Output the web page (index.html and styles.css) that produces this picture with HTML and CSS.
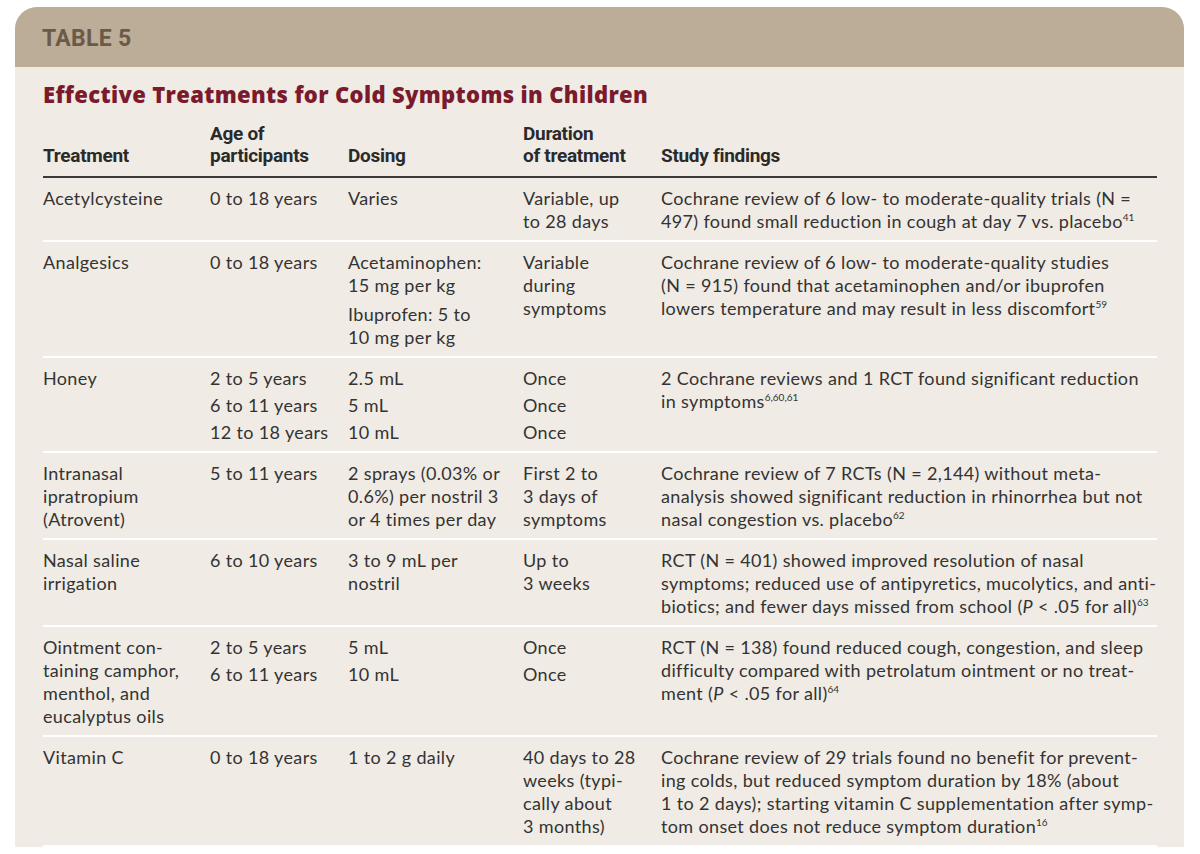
FILE: index.html
```html
<!DOCTYPE html>
<html lang="en">
<head>
    <meta charset="UTF-8">
    <title>Table 5 - Effective Treatments for Cold Symptoms in Children</title>
<link rel="stylesheet" href="styles.css">
</head>
<body>
    <div class="table-card">
        <div class="card-head">TABLE 5</div>
        <div class="card-body">
            <h2 class="card-title">Effective Treatments for Cold Symptoms in Children</h2>
            <table class="treat-table">
                <thead>
                    <tr>
                        <th class="col-treat">Treatment</th>
                        <th class="col-age">Age of<br>participants</th>
                        <th class="col-dose">Dosing</th>
                        <th class="col-dur">Duration<br>of treatment</th>
                        <th class="col-find">Study findings</th>
                    </tr>
                </thead>
                <tbody>
                    <tr>
                        <td>Acetylcysteine</td>
                        <td>0 to 18 years</td>
                        <td>Varies</td>
                        <td>Variable, up<br>to 28 days</td>
                        <td>Cochrane review of 6 low- to moderate-quality trials (N =<br>497) found small reduction in cough at day 7 vs. placebo<sup>41</sup></td>
                    </tr>
                    <tr>
                        <td>Analgesics</td>
                        <td>0 to 18 years</td>
                        <td>
                            <p class="dose-line">Acetaminophen:<br>15 mg per kg</p>
                            <p class="dose-line">Ibuprofen: 5 to<br>10 mg per kg</p>
                        </td>
                        <td>Variable<br>during<br>symptoms</td>
                        <td>Cochrane review of 6 low- to moderate-quality studies<br>(N = 915) found that acetaminophen and/or ibuprofen<br>lowers temperature and may result in less discomfort<sup>59</sup></td>
                    </tr>
                    <tr>
                        <td>Honey</td>
                        <td class="stack"><div>2 to 5 years</div><div>6 to 11 years</div><div>12 to 18 years</div></td>
                        <td class="stack"><div>2.5 mL</div><div>5 mL</div><div>10 mL</div></td>
                        <td class="stack"><div>Once</div><div>Once</div><div>Once</div></td>
                        <td>2 Cochrane reviews and 1 RCT found significant reduction<br>in symptoms<sup>6,60,61</sup></td>
                    </tr>
                    <tr>
                        <td>Intranasal<br>ipratropium<br>(Atrovent)</td>
                        <td>5 to 11 years</td>
                        <td>2 sprays (0.03% or<br>0.6%) per nostril 3<br>or 4 times per day</td>
                        <td>First 2 to<br>3 days of<br>symptoms</td>
                        <td>Cochrane review of 7 RCTs (N = 2,144) without meta-<br>analysis showed significant reduction in rhinorrhea but not<br>nasal congestion vs. placebo<sup>62</sup></td>
                    </tr>
                    <tr>
                        <td>Nasal saline<br>irrigation</td>
                        <td>6 to 10 years</td>
                        <td>3 to 9 mL per<br>nostril</td>
                        <td>Up to<br>3 weeks</td>
                        <td>RCT (N = 401) showed improved resolution of nasal<br>symptoms; reduced use of antipyretics, mucolytics, and anti-<br>biotics; and fewer days missed from school (<i>P</i> &lt; .05 for all)<sup>63</sup></td>
                    </tr>
                    <tr>
                        <td>Ointment con-<br>taining camphor,<br>menthol, and<br>eucalyptus oils</td>
                        <td class="stack"><div>2 to 5 years</div><div>6 to 11 years</div></td>
                        <td class="stack"><div>5 mL</div><div>10 mL</div></td>
                        <td class="stack"><div>Once</div><div>Once</div></td>
                        <td>RCT (N = 138) found reduced cough, congestion, and sleep<br>difficulty compared with petrolatum ointment or no treat-<br>ment (<i>P</i> &lt; .05 for all)<sup>64</sup></td>
                    </tr>
                    <tr>
                        <td>Vitamin C</td>
                        <td>0 to 18 years</td>
                        <td>1 to 2 g daily</td>
                        <td>40 days to 28<br>weeks (typi-<br>cally about<br>3 months)</td>
                        <td>Cochrane review of 29 trials found no benefit for prevent-<br>ing colds, but reduced symptom duration by 18% (about<br>1 to 2 days); starting vitamin C supplementation after symp-<br>tom onset does not reduce symptom duration<sup>16</sup></td>
                    </tr>
                </tbody>
            </table>
        </div>
    </div>
</body>
</html>
```

FILE: styles.css
```css
body{
    margin:0;
    background-color:white;
    font-family:Lato, "Open Sans", sans-serif;
    color:#333;
}
.table-card{
    margin:7px 16px 0 15px;
    border-radius:22px 22px 0 0;
    overflow:hidden;
    background-color:#f0ebe4;
}
.card-head{
    background-color:#bcad98;
    height:56px;
    padding:4px 0 0 27px;
    font-family:Roboto, sans-serif;
    font-weight:bold;
    font-size:23px;
    letter-spacing:0.3px;
    line-height:56px;
    color:#6b5a48;
}
.card-body{
    padding:13px 27px 0 28px;
}
.card-title{
    margin:0;
    font-family:"Open Sans", sans-serif;
    font-weight:800;
    font-size:22px;
    letter-spacing:0.35px;
    line-height:28px;
    color:#7a1a2c;
}
.treat-table{
    margin-top:15px;
    width:100%;
    border-collapse:collapse;
    table-layout:fixed;
}
.treat-table th{
    font-family:Roboto, sans-serif;
    font-weight:bold;
    font-size:19px;
    letter-spacing:-0.3px;
    line-height:22px;
    color:#2a2a2a;
    text-align:left;
    vertical-align:bottom;
    padding:0 0 9px 0;
    border-bottom:2px solid #3a3a3a;
}
.col-treat{ width:167px; }
.col-age{ width:138px; }
.col-dose{ width:175px; }
.col-dur{ width:138px; }
.treat-table td{
    font-size:18px;
    letter-spacing:0.35px;
    line-height:23px;
    vertical-align:top;
    white-space:nowrap;
    padding:9px 0 7px 0;
    border-bottom:2px solid #fff;
}
.treat-table sup{
    font-size:10px;
    letter-spacing:0;
    line-height:0;
    vertical-align:7px;
}
.dose-line{
    margin:0 0 6px 0;
}
.dose-line:last-child{
    margin-bottom:0;
}
.stack > div{
    margin-bottom:4px;
}
.stack > div:last-child{
    margin-bottom:0;
}
```
